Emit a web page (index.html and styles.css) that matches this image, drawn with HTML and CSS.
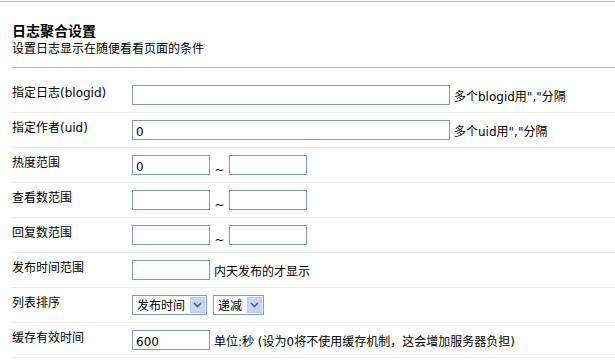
FILE: index.html
```html
<!DOCTYPE html>
<html lang="zh-CN">
<head>
    <meta charset="UTF-8">
    <title>日志聚合设置</title>
    <link rel="stylesheet" href="styles.css">
</head>
<body>
    <div class="page">
        <div class="head">
            <h3>日志聚合设置</h3>
            <p>设置日志显示在随便看看页面的条件</p>
        </div>

        <table class="form">
            <tr>
                <td class="label">指定日志(blogid)</td>
                <td><div class="field"><input type="text" class="txt long"><span class="tip">多个blogid用","分隔</span></div></td>
            </tr>
            <tr>
                <td class="label">指定作者(uid)</td>
                <td><div class="field"><input type="text" class="txt long" value="0"><span class="tip">多个uid用","分隔</span></div></td>
            </tr>
            <tr>
                <td class="label">热度范围</td>
                <td><div class="field"><input type="text" class="txt short" value="0"><span class="tilde">~</span><input type="text" class="txt short"></div></td>
            </tr>
            <tr>
                <td class="label">查看数范围</td>
                <td><div class="field"><input type="text" class="txt short"><span class="tilde">~</span><input type="text" class="txt short"></div></td>
            </tr>
            <tr>
                <td class="label">回复数范围</td>
                <td><div class="field"><input type="text" class="txt short"><span class="tilde">~</span><input type="text" class="txt short"></div></td>
            </tr>
            <tr>
                <td class="label">发布时间范围</td>
                <td><div class="field"><input type="text" class="txt short"><span class="tip">内天发布的才显示</span></div></td>
            </tr>
            <tr>
                <td class="label">列表排序</td>
                <td>
                    <div class="field">
                        <span class="sel sel-time">
                            <select><option>发布时间</option><option>查看数</option><option>回复数</option></select>
                            <span class="arrow"><svg width="9" height="6" viewBox="0 0 9 6"><path d="M1 1 L4.5 4.5 L8 1" fill="none" stroke="#4d6185" stroke-width="1.6"/></svg></span>
                        </span>
                        <span class="sel sel-order">
                            <select><option>递减</option><option>递增</option></select>
                            <span class="arrow"><svg width="9" height="6" viewBox="0 0 9 6"><path d="M1 1 L4.5 4.5 L8 1" fill="none" stroke="#4d6185" stroke-width="1.6"/></svg></span>
                        </span>
                    </div>
                </td>
            </tr>
            <tr>
                <td class="label">缓存有效时间</td>
                <td><div class="field"><input type="text" class="txt short" value="600"><span class="tip">单位:秒 (设为0将不使用缓存机制，这会增加服务器负担)</span></div></td>
            </tr>
        </table>
    </div>
</body>
</html>
```

FILE: styles.css
```css
html, body {
    margin: 0;
    padding: 0;
    background: #fff;
    color: #000;
    font-family: "DejaVu Sans", "Noto Sans CJK SC", sans-serif;
    font-size: 12px;
}

.page {
    margin-top: 1px;
    border-top: 1px solid #e0ad55;
}

.head {
    margin-left: 12px;
    padding: 19px 0 9px;
    border-bottom: 1px solid #e0ad55;
}

.head h3 {
    margin: 0;
    font-family: "Noto Sans CJK SC", sans-serif;
    font-size: 14px;
    line-height: 18px;
    font-weight: bold;
}

.head p {
    margin: 1px 0 0;
    line-height: 18px;
}

.form {
    margin: 10px 0 0 12px;
    width: calc(100% - 12px);
    border-collapse: collapse;
}

.form td {
    height: 20px;
    padding: 7px 0;
    border-bottom: 1px solid #ededed;
    vertical-align: top;
    white-space: nowrap;
    line-height: 14px;
}

.form td.label {
    width: 120px;
    padding: 8px 0 6px;
}

.field {
    display: flex;
    align-items: flex-start;
    height: 20px;
}

.txt {
    box-sizing: border-box;
    height: 20px;
    margin: 0;
    padding: 4px 3px 0;
    border: 1px solid #7f9db9;
    font-family: "DejaVu Sans", "Noto Sans CJK SC", sans-serif;
    font-size: 12px;
    line-height: 14px;
    color: #000;
    outline: none;
}

.long {
    width: 318px;
}

.short {
    width: 78px;
}

.tip {
    margin-left: 4px;
    padding-top: 5px;
    line-height: 14px;
}

.tilde {
    width: 19px;
    padding-top: 8px;
    text-align: center;
    line-height: 14px;
}

.sel {
    position: relative;
    display: block;
    height: 20px;
    margin-right: 6px;
}

.sel select {
    appearance: none;
    -webkit-appearance: none;
    box-sizing: border-box;
    height: 20px;
    margin: 0;
    padding: 2px 0 0 4px;
    border: 1px solid #7f9db9;
    background: #fff;
    font-family: "DejaVu Sans", "Noto Sans CJK SC", sans-serif;
    font-size: 12px;
    color: #000;
    outline: none;
}

.sel-time select {
    width: 75px;
}

.sel-order select {
    width: 51px;
}

.sel .arrow {
    position: absolute;
    right: 2px;
    top: 2px;
    width: 15px;
    height: 16px;
    box-sizing: border-box;
    border: 1px solid #b9cdf6;
    background: #c6d6fb;
    display: flex;
    align-items: center;
    justify-content: center;
    pointer-events: none;
}
```
